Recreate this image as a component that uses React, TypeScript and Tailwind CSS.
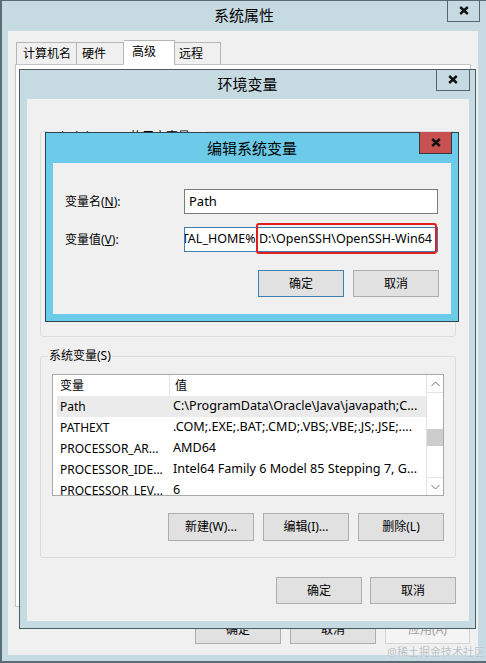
import React from 'react';

const CloseX = () => (
  <svg width="10" height="9" viewBox="0 0 10 9">
    <path d="M1.2 1L8.8 8M8.8 1L1.2 8" stroke="#111" strokeWidth="2.4" />
  </svg>
);

const Chevron = ({ up }: { up?: boolean }) => (
  <svg width="9" height="6" viewBox="0 0 9 6">
    <path d={up ? 'M0.5 5L4.5 1L8.5 5' : 'M0.5 1L4.5 5L8.5 1'} stroke="#707070" strokeWidth="1" fill="none" />
  </svg>
);

function Btn({ children, w = 'w-[86px]', h = 'h-[28px]', def, disabled }: { children: React.ReactNode; w?: string; h?: string; def?: boolean; disabled?: boolean }) {
  return (
    <div
      className={`${w} ${h} flex items-center justify-center text-[12px] border ${
        def ? 'border-[#3c7fb1] bg-[#e1e1e1]' : disabled ? 'border-[#d5d5d5] bg-[#f4f4f4] text-[#a0a0a0]' : 'border-[#adadad] bg-[#e1e1e1]'
      }`}
    >
      {children}
    </div>
  );
}

const rows = [
  ['Path', 'C:\\ProgramData\\Oracle\\Java\\javapath;C...'],
  ['PATHEXT', '.COM;.EXE;.BAT;.CMD;.VBS;.VBE;.JS;.JSE;....'],
  ['PROCESSOR_AR...', 'AMD64'],
  ['PROCESSOR_IDE...', 'Intel64 Family 6 Model 85 Stepping 7, G...'],
  ['PROCESSOR_LEV...', '6'],
];

export default function App() {
  return (
    <div className="relative w-[486px] h-[663px] overflow-hidden bg-[#c6dae2] border-l-2 border-b-2 border-t border-[#5a6b73] text-[#000] font-['Noto_Sans','Noto_Sans_CJK_SC',sans-serif]">
      {/* 系统属性 */}
      <div className="h-[29px] flex items-center justify-center text-[15px]">系统属性</div>
      <div className="absolute top-[-1px] right-[6px] w-[33px] h-[22px] border border-t-0 border-[#55666e] flex items-center justify-center">
        <CloseX />
      </div>
      <div className="absolute left-[6px] top-[30px] right-[8px] bottom-[6px] bg-[#f0f0f0] flex flex-col">
        <div className="h-[33px] pl-[8px] flex items-end text-[12px]">
          <div className="h-[22px] w-[61px] border border-b-0 border-[#b5b5b5] flex items-center pl-[6px]">计算机名</div>
          <div className="h-[22px] w-[47px] border border-l-0 border-b-0 border-[#b5b5b5] flex items-center pl-[5px]">硬件</div>
          <div className="relative z-10 h-[25px] -mb-px w-[51px] border border-l-0 border-b-0 border-[#b5b5b5] bg-white pl-[8px] pt-[2px]">高级</div>
          <div className="h-[22px] w-[46px] border border-l-0 border-b-0 border-[#b5b5b5] flex items-center pl-[4px]">远程</div>
        </div>
        <div className="mx-[7px] h-[543px] border border-[#c4c4c4] bg-white" />
        <div className="mt-auto mb-[11px] pr-[8px] flex justify-end gap-[9px]">
          <Btn>确定</Btn>
          <Btn>取消</Btn>
          <Btn disabled w="w-[85px]">应用(A)</Btn>
        </div>
      </div>

      {/* 环境变量 */}
      <div className="absolute left-[17px] top-[68px] w-[457px] h-[560px] border border-[#4a5a61] bg-[#c6dae2]">
        <div className="h-[29px] flex items-center justify-center text-[15px]">环境变量</div>
        <div className="absolute top-[-1px] right-[5px] w-[34px] h-[22px] border border-t-0 border-[#55666e] flex items-center justify-center">
          <CloseX />
        </div>
        <div className="absolute left-[7px] top-[29px] right-[6px] bottom-[7px] bg-[#f0f0f0] flex flex-col px-[13px] text-[12px]">
          <div className="relative mt-[32px] h-[206px] border border-[#dcdcdc] rounded-[3px]">
            <div className="absolute left-[7px] -top-[3px] bg-[#f0f0f0] px-px leading-[16px]">Administrator 的用户变量(U)</div>
          </div>
          <div className="relative mt-[19px] h-[202px] border border-[#dcdcdc] rounded-[3px] px-[11px] pt-[17px]">
            <div className="absolute left-[7px] -top-[9px] bg-[#f0f0f0] px-px leading-[16px]">系统变量(S)</div>
            <div className="h-[122px] border border-[#a8a8a8] bg-white flex overflow-hidden">
              <div className="flex-1 min-w-0">
                <div className="h-[21px] flex items-center">
                  <div className="w-[117px] h-full pl-[7px] flex items-center border-r border-[#e5e5e5]">变量</div>
                  <div className="pl-[5px]">值</div>
                </div>
                {rows.map(([k, v], i) => (
                  <div key={k} className={`h-[21px] ml-[4px] flex items-center whitespace-nowrap ${i === 0 ? 'bg-[#ebebeb]' : ''}`}>
                    <div className="w-[116px] pl-[3px]">{k}</div>
                    <div className="text-[12.6px]">{v}</div>
                  </div>
                ))}
              </div>
              <div className="w-[17px] flex flex-col border-l border-[#e3e3e3] bg-white">
                <div className="h-[18px] border-b border-[#e3e3e3] flex items-center justify-center">
                  <Chevron up />
                </div>
                <div className="h-[36px]" />
                <div className="h-[17px] bg-[#cdcdcd]" />
                <div className="flex-1" />
                <div className="h-[18px] border-t border-[#e3e3e3] flex items-center justify-center">
                  <Chevron />
                </div>
              </div>
            </div>
            <div className="mt-[17px] flex justify-end gap-[9px]">
              <Btn>新建(W)...</Btn>
              <Btn>编辑(I)...</Btn>
              <Btn>删除(L)</Btn>
            </div>
          </div>
          <div className="mt-[19px] flex justify-end gap-[8px]">
            <Btn h="h-[27px]">确定</Btn>
            <Btn h="h-[27px]">取消</Btn>
          </div>
        </div>
      </div>

      {/* 编辑系统变量 */}
      <div className="absolute left-[43px] top-[131px] w-[414px] h-[190px] border border-[#2d4550] bg-[#6ccbe8]">
        <div className="h-[30px] flex items-center justify-center text-[15px]">编辑系统变量</div>
        <div className="absolute top-[-1px] right-[6px] w-[33px] h-[22px] border border-t-0 border-[#3a3a3a] bg-[#c75050] flex items-center justify-center">
          <CloseX />
        </div>
        <div className="absolute left-[7px] top-[30px] right-[7px] bottom-[7px] bg-[#f0f0f0] pl-[12px] text-[12px]">
          <div className="mt-[26px] h-[25px] flex items-center">
            <div className="w-[119px]">
              变量名(<span className="underline">N</span>):
            </div>
            <div className="w-[254px] h-full border border-[#7a7a7a] bg-white flex items-center pl-[4px] text-[13px]">Path</div>
          </div>
          <div className="mt-[13px] h-[25px] flex items-center">
            <div className="w-[119px]">
              变量值(<span className="underline">V</span>):
            </div>
            <div className="w-[254px] h-full border border-[#3c7fb1] bg-white flex items-center justify-end pr-[5px] overflow-hidden whitespace-nowrap text-[12.5px]">
              <span>%JAVA_HOME%\bin;%TOTAL_HOME% D:\OpenSSH\OpenSSH-Win64</span>
              <span className="w-px h-[17px] bg-black" />
            </div>
          </div>
          <div className="mt-[18px] pr-[12px] flex justify-end gap-[9px]">
            <Btn def h="h-[27px]">确定</Btn>
            <Btn h="h-[27px]">取消</Btn>
          </div>
        </div>
      </div>

      <div className="absolute left-[254px] top-[222px] w-[181px] h-[31px] border-2 border-[#e0201f] rounded-[3px]" />

      <div className="absolute right-[1px] bottom-[1px] text-[11px] text-[#b4c0c5] [text-shadow:0_0_1px_#fff]">@稀土掘金技术社区</div>
    </div>
  );
}
